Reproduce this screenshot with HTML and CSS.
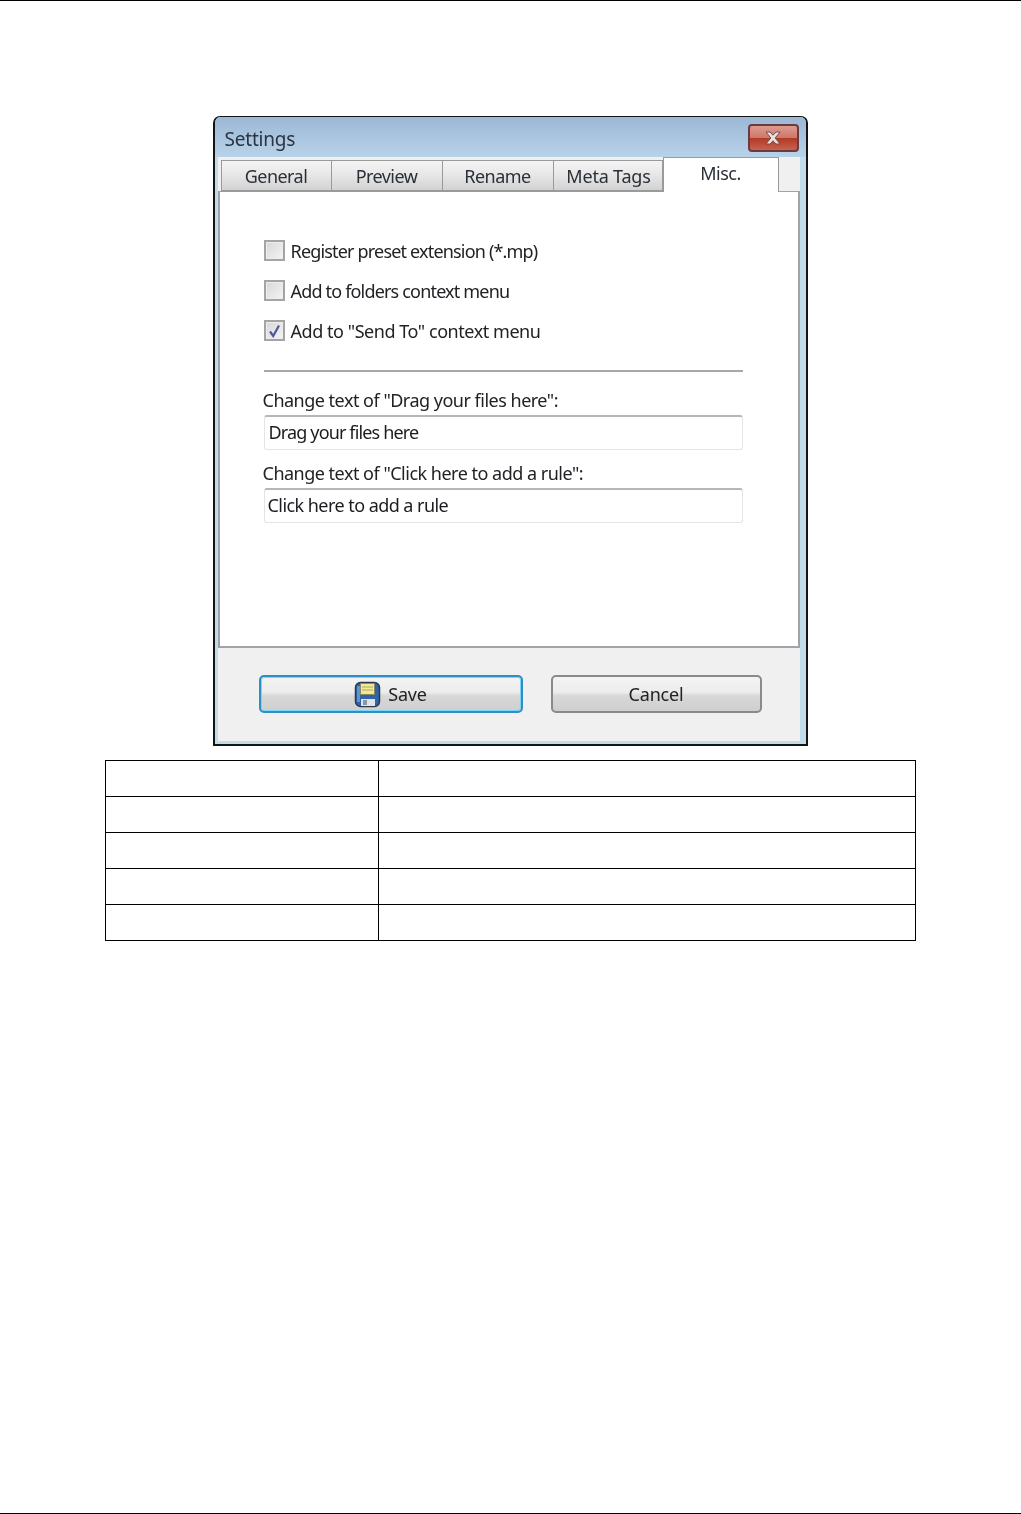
FILE: index.html
```html
<!DOCTYPE html>
<html lang="en">
<head>
  <meta charset="UTF-8">
  <meta name="viewport" content="width=device-width, initial-scale=1.0">
  <title>Settings</title>
  <link rel="stylesheet" href="styles.css">
</head>
<body>

  <div class="page">
    <section class="window">
      <div class="titlebar">
        <span class="title">Settings</span>
        <button class="close" type="button" aria-label="Close">
          <svg width="20" height="14" viewBox="0 0 20 14">
            <path d="M3 1h4l3 3.2L13 1h4l-4.800 6 4.800 6h-4l-3-3.2L7 13H3l4.800-6z" fill="#e6e3e3" stroke="#7a4a48" stroke-width="1"/>
          </svg>
        </button>
      </div>

      <div class="window-body">
        <div class="tabs">
          <div class="tab tab-general">General</div>
          <div class="tab tab-preview">Preview</div>
          <div class="tab tab-rename">Rename</div>
          <div class="tab tab-meta">Meta Tags</div>
          <div class="tab tab-active">Misc.</div>
        </div>

        <div class="panel">
          <div class="check-row">
            <span class="checkbox"></span>
            <span>Register preset extension (*.mp)</span>
          </div>
          <div class="check-row">
            <span class="checkbox"></span>
            <span>Add to folders context menu</span>
          </div>
          <div class="check-row">
            <span class="checkbox">
              <svg width="13" height="14" viewBox="0 0 13 14">
                <path d="M2 7.500l3.200 4.500L11 1.500" fill="none" stroke="#4a5a9c" stroke-width="2.200"/>
              </svg>
            </span>
            <span class="send-to">Add to "Send To" context menu</span>
          </div>

          <hr class="divider">

          <div class="field-label">Change text of "Drag your files here":</div>
          <div class="field field-drag">Drag your files here</div>
          <div class="field-label field-label-second">Change text of "Click here to add a rule":</div>
          <div class="field field-click">Click here to add a rule</div>
        </div>

        <div class="footer">
          <button class="btn btn-save" type="button">
            <svg width="27" height="27" viewBox="0 0 27 27">
              <rect x="1.500" y="1.500" width="24" height="24" rx="5" fill="#2f64a8" stroke="#2c3a4c" stroke-width="1.500"/>
              <path d="M3 5v16h3V5z" fill="#5c94d4"/>
              <rect x="6.500" y="2.500" width="14" height="11" fill="#f4ea90" stroke="#8a8a60" stroke-width="1"/>
              <path d="M8 6h11M8 9h11" stroke="#a8a47c" stroke-width="1"/>
              <rect x="7" y="18" width="14" height="7" fill="#dfe4ea"/>
              <rect x="9" y="19" width="4" height="5" fill="#8b97a6"/>
            </svg>
            <span>Save</span>
          </button>
          <button class="btn btn-cancel" type="button">Cancel</button>
        </div>
      </div>
    </section>

    <table class="grid">
      <tr><td class="col-left"></td><td></td></tr>
      <tr><td></td><td></td></tr>
      <tr><td></td><td></td></tr>
      <tr><td></td><td></td></tr>
      <tr><td></td><td></td></tr>
    </table>
  </div>

</body>
</html>
```
FILE: styles.css
```css
/* General Styles */
* {
  margin: 0;
  padding: 0;
  box-sizing: border-box;
}

body {
  background-color: white;
  font-family: "Noto Sans", Arial, sans-serif;
}

.page {
  height: 1514px;
  border-top: 1px solid black;
  border-bottom: 1px solid black;
  padding-top: 115px;
  display: flex;
  flex-direction: column;
  align-items: center;
}

/* Dialog window */
.window {
  width: 595px;
  height: 630px;
  margin-right: 1px;
  border: 2px solid #141414;
  border-top-width: 1px;
  border-radius: 7px 7px 0 0;
  background-color: #c3dcec;
  display: flex;
  flex-direction: column;
  color: #222226;
  font-size: 18px;
  letter-spacing: -0.82px;
  filter: blur(0.35px);
}

.titlebar {
  height: 40px;
  flex: none;
  padding: 0 7px 0 10px;
  background: linear-gradient(#9bb8d4, #b8d2e8);
  border-radius: 6px 6px 0 0;
  display: flex;
  justify-content: space-between;
  align-items: center;
}

.title {
  margin-top: 4px;
  font-size: 19px;
  letter-spacing: -0.2px;
  color: #2b3440;
}

.close {
  width: 51px;
  height: 28px;
  margin-top: 2px;
  border: 2px solid #6b3b42;
  border-radius: 4px;
  background: linear-gradient(#dd9b90 0%, #d0776a 48%, #b13c26 52%, #c8614e 100%);
  display: flex;
  justify-content: center;
  align-items: center;
}

.window-body {
  flex: 1;
  margin: 0 6px 3px 3px;
  background-color: #f0f0f0;
  display: flex;
  flex-direction: column;
}

/* Tabs */
.tabs {
  height: 35px;
  flex: none;
  margin-bottom: -1px;
  padding-left: 3px;
  display: flex;
  align-items: flex-end;
  position: relative;
  z-index: 1;
}

.tab {
  height: 32px;
  padding-top: 1px;
  border: 1px solid #9a9a9a;
  border-bottom: 2px solid #9a9a9a;
  border-left-width: 0;
  background: linear-gradient(#f4f4f4, #e8e8e8 45%, #d2d2d2);
  color: #2a3038;
  letter-spacing: -0.55px;
  display: flex;
  justify-content: center;
  align-items: center;
}

.tab-general {
  width: 111px;
  border-left-width: 1px;
}

.tab-preview,
.tab-rename {
  width: 111px;
}

.tab-meta {
  width: 109px;
  padding-left: 2px;
  letter-spacing: -0.2px;
}

.tab-active {
  width: 116px;
  height: 35px;
  border: 1px solid #9a9a9a;
  border-bottom: none;
  background: white;
  padding-top: 3px;
  align-items: flex-start;
}

/* Panel */
.panel {
  height: 457px;
  flex: none;
  border: 2px solid #a0a4a8;
  border-top-width: 1px;
  background-color: white;
  padding: 48px 55px 0 44px;
}

.check-row {
  height: 21px;
  margin-bottom: 19px;
  display: flex;
  align-items: center;
  gap: 6px;
}

.send-to {
  letter-spacing: -0.45px;
}

.checkbox {
  width: 21px;
  height: 21px;
  flex: none;
  border: 2px solid #a4a4a4;
  outline: 1px solid #ededed;
  outline-offset: -3px;
  background: linear-gradient(135deg, #d8d8d8, #f4f4f4);
  display: flex;
  justify-content: center;
  align-items: center;
}

.divider {
  height: 2px;
  border: none;
  margin-top: 29px;
  background-color: #a8a8a8;
}

.field-label {
  height: 24px;
  margin: 16px 0 0 -1px;
  line-height: 24px;
  white-space: nowrap;
  letter-spacing: -0.5px;
}

.field-label-second {
  margin-top: 11px;
}

.field {
  height: 35px;
  margin-top: 3px;
  border: 1px solid #e4e4e6;
  border-top: 2px solid #b4b6b8;
  border-radius: 3px;
  padding-left: 3px;
  line-height: 30px;
  white-space: nowrap;
  color: #1c1c20;
}

.field-drag {
  padding-left: 4px;
  letter-spacing: -0.85px;
}

.field-click {
  letter-spacing: -0.55px;
}

/* Buttons */
.footer {
  flex: 1;
  padding: 27px 0 0 41px;
  display: flex;
  align-items: flex-start;
  gap: 28px;
}

.btn {
  height: 38px;
  border: 2px solid #8a8a8a;
  border-radius: 5px;
  background: linear-gradient(#f4f4f4, #ececec 45%, #d8d8d8 55%, #cfcfcf);
  font-family: inherit;
  font-size: 18px;
  letter-spacing: -0.2px;
  color: #222226;
  display: flex;
  justify-content: center;
  align-items: center;
  gap: 7px;
}

.btn-save {
  width: 264px;
  border-color: #2f8fc4;
  box-shadow: inset 0 0 0 1px #7fd4f0;
}

.btn-cancel {
  width: 211px;
}

/* Table below the picture */
.grid {
  width: 811px;
  margin-top: 14px;
  border-collapse: collapse;
  flex: none;
}

.grid td {
  height: 36px;
  border: 1px solid black;
}

.col-left {
  width: 273px;
}
```
